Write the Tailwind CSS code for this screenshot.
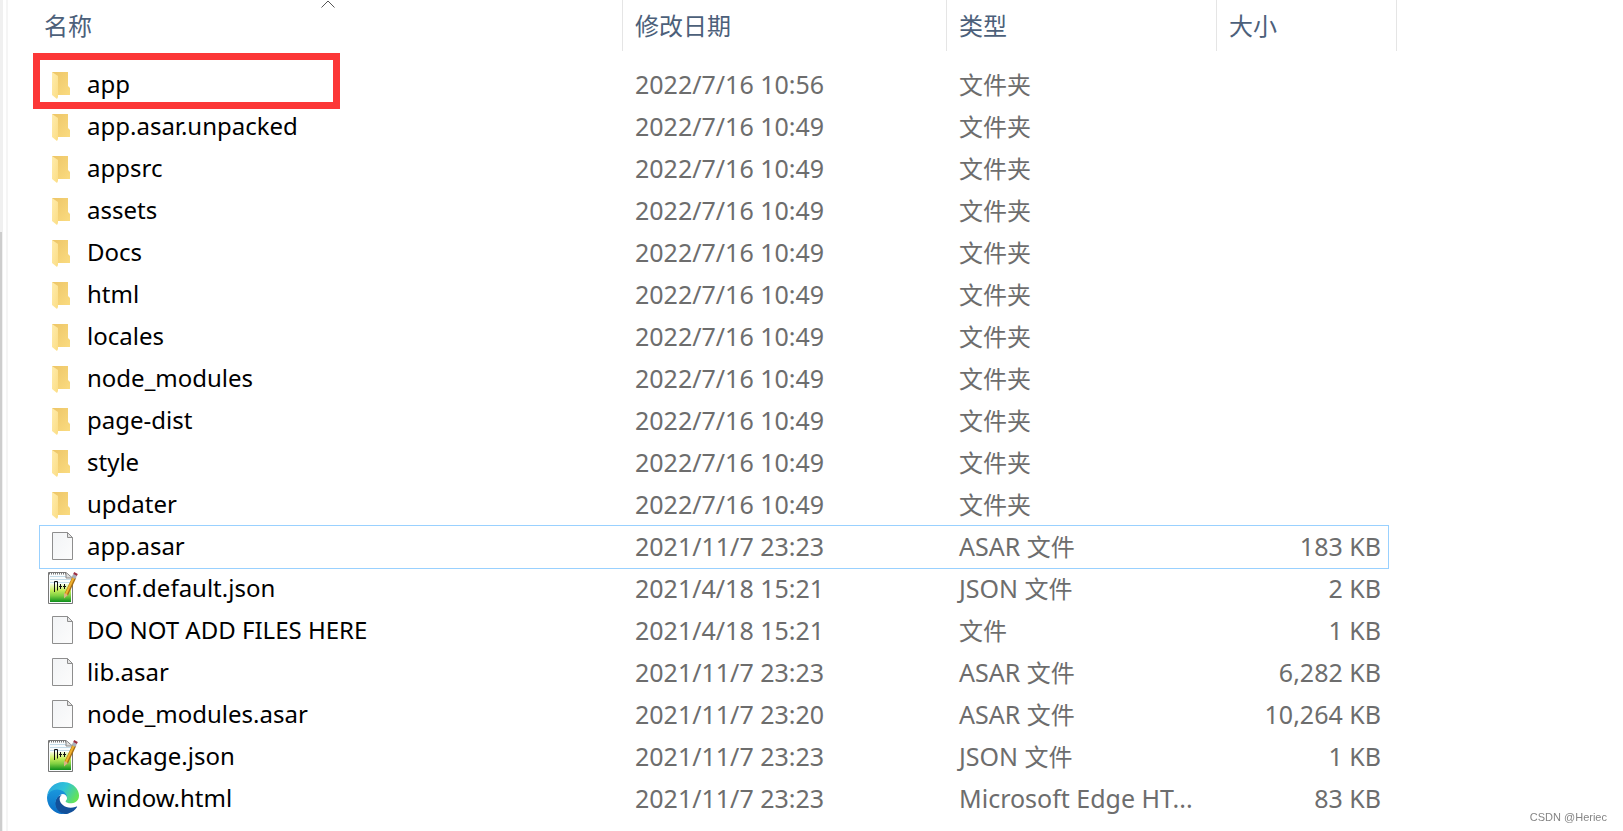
<!DOCTYPE html>
<html lang="zh-CN">
<head>
    <meta charset="UTF-8">
    <meta name="viewport" content="width=device-width, initial-scale=1.0">
    <title>resources</title>
    <script src="https://cdn.jsdelivr.net/npm/@tailwindcss/browser@4"></script>
</head>
<body class="bg-white font-['Noto_Sans','Noto_Sans_CJK_SC',sans-serif] text-[25px] text-[#6d6d6d]">
    <!-- icons -->
    <svg class="absolute size-0">
        <defs>
            <linearGradient id="gFront" x1="0" y1="0" x2="1" y2="1">
                <stop offset="0" stop-color="#ffecac"/><stop offset="1" stop-color="#fbdd85"/>
            </linearGradient>
            <linearGradient id="gBack" x1="0" y1="0" x2="1" y2="1">
                <stop offset="0" stop-color="#edc567"/><stop offset="1" stop-color="#fadb80"/>
            </linearGradient>
            <linearGradient id="gPage" x1="0" y1="0" x2="1" y2="1">
                <stop offset="0" stop-color="#f2f4f6"/><stop offset="1" stop-color="#fcfcfc"/>
            </linearGradient>
            <linearGradient id="gGreen" x1="0" y1="0" x2="0" y2="1">
                <stop offset="0" stop-color="#f4fbe0"/><stop offset=".35" stop-color="#c6ee5c"/><stop offset=".65" stop-color="#7fd042"/><stop offset="1" stop-color="#0c8f1b"/>
            </linearGradient>
            <linearGradient id="gEdgeTop" x1="0" y1=".2" x2="1" y2=".6">
                <stop offset="0" stop-color="#2aa5e0"/><stop offset=".5" stop-color="#2fc3d8"/><stop offset="1" stop-color="#66e455"/>
            </linearGradient>
            <linearGradient id="gEdgeLeft" x1="0" y1="0" x2="0" y2="1">
                <stop offset="0" stop-color="#1b9ade"/><stop offset="1" stop-color="#0a6cc4"/>
            </linearGradient>
        </defs>
        <symbol id="folder" viewBox="0 0 32 32">
            <path d="M5 4H21V18L23 20V27H9Z" fill="url(#gBack)"/>
            <path d="M5 4L11 8V29L10 31L5 27Z" fill="url(#gFront)"/>
        </symbol>
        <symbol id="file" viewBox="0 0 32 32">
            <path d="M5.500 2.500H20.500L25.500 7.500V29.500H5.500Z" fill="url(#gPage)" stroke="#8e8e8e"/>
            <path d="M20.500 2.500V7.500H25.500Z" fill="#e4e4e4" stroke="#8e8e8e"/>
        </symbol>
        <symbol id="npp" viewBox="0 0 32 32">
            <path d="M1.500 .5H19L25.500 6V31.500H1.500Z" fill="#fafcfd" stroke="#777"/>
            <path d="M2 1.500H19" stroke="#777" stroke-width="2" stroke-dasharray="1 1"/>
            <path d="M3 4.500H19M3 7.500H24M3 10.500H24" stroke="#c3dbe8"/>
            <path d="M3 12H24V30H3Z" fill="url(#gGreen)"/>
            <path d="M19 1V6H25" fill="#ddd" stroke="#888"/>
            <path d="M7.500 20V9.500H10.500V18.500M12 14.500H15M13.500 12V17M16 14.500H19M17.500 12V17" fill="none" stroke="#111"/>
            <path d="M27.500 5L19 23" stroke="#a86e13" stroke-width="4"/>
            <path d="M27 5L18.500 23" stroke="#f0b12e" stroke-width="2"/>
            <path d="M17 21L21 23L17 26.500Z" fill="#d9b483"/>
            <path d="M26.500 6L28 3" stroke="#a9b0bb" stroke-width="4"/>
            <path d="M28 3L29 1" stroke="#9c2f43" stroke-width="4"/>
        </symbol>
        <symbol id="edge" viewBox="0 0 256 256">
            <path fill="#12509a" d="M235.700 195.500a94 94 0 0 1-10.500 4.700 102 102 0 0 1-36 6.400c-47.300 0-88.500-32.500-88.500-74.300a31.500 31.500 0 0 1 16.400-27.300c-42.800 1.800-53.800 46.400-53.800 72.500 0 73.900 68 78.400 82.800 78.400 7.900 0 19.800-2.300 27-4.600l1.300-.4a128 128 0 0 0 66.600-50.800 4 4 0 0 0-5.300-4.600z"/>
            <path fill="url(#gEdgeLeft)" d="M105.700 241.400A79 79 0 0 1 83 220a81 81 0 0 1 29.500-120c3.100-1.500 8.500-4.100 15.500-4a32 32 0 0 1 25.700 13 32 32 0 0 1 6.400 18.700c0-.2 24.400-79.600-80-79.600-43.900 0-80 41.700-80 78.200a130 130 0 0 0 12 56 128 128 0 0 0 156.400 67.100 75.500 75.500 0 0 1-62.800-8z"/>
            <path fill="url(#gEdgeTop)" d="M152.300 148.900c-.8 1-3.300 2.500-3.300 5.600 0 2.600 1.700 5.100 4.700 7.200 14.400 10 41.500 8.700 41.600 8.700a59.600 59.600 0 0 0 30.300-8.300A61.400 61.400 0 0 0 256 109.300c.3-22.400-8-37.300-11.300-43.900C223.500 23.900 177.700 0 128 0A128 128 0 0 0 0 126.200c.5-36.500 36.800-66 80-66 3.500 0 23.500.3 42 10 16.300 8.600 24.900 19 30.900 29.200 6.200 10.700 7.200 24.200 7.200 29.600s-2.700 13.300-7.800 19.900z"/>
        </symbol>
    </svg>

    <!-- pane splitter with the scroll bar on the left -->
    <div class="flex min-h-screen">
        <div class="w-[3px] bg-[#f0f0f0] pt-[232px] flex">
            <div class="w-[2px] bg-[#cdcdcd]"></div>
        </div>
        <div class="w-[5px] border-r-2 border-[#f5f5f5]"></div>

        <main class="flex-1 pl-[31px] pr-[226px]">
            <table class="w-full table-fixed border-separate border-spacing-0 whitespace-nowrap">
                <thead class="text-2xl text-[#4c607a] text-left">
                    <tr class="h-[51px]">
                        <th class="relative border-r border-[#e5e5e5] pt-px pl-[5px] font-normal">名称
                            <svg class="absolute left-[282px] top-0 w-[14px] h-[8px]" viewBox="0 0 14 8" fill="none" stroke="#555"><path d="M.5 7.500L7 1L13.500 7.500"/></svg>
                        </th>
                        <th class="w-[324px] border-r border-[#e5e5e5] pt-px pl-3 font-normal">修改日期</th>
                        <th class="w-[270px] border-r border-[#e5e5e5] pt-px pl-3 font-normal">类型</th>
                        <th class="w-[180px] border-r border-[#e5e5e5] pt-px pl-3 font-normal">大小</th>
                    </tr>
                    <tr class="h-[13px]"></tr>
                </thead>
                <tbody id="files"></tbody>
            </table>
        </main>
    </div>
    <p class="fixed right-4 bottom-1 font-['Liberation_Sans',sans-serif] text-[11px] leading-5 text-[#858585]">CSDN @Heriec</p>

    <script>
        const files = [
            ['folder', 'app', '2022/7/16 10:56', '', '文件夹', ''],
            ['folder', 'app.asar.unpacked', '2022/7/16 10:49', '', '文件夹', ''],
            ['folder', 'appsrc', '2022/7/16 10:49', '', '文件夹', ''],
            ['folder', 'assets', '2022/7/16 10:49', '', '文件夹', ''],
            ['folder', 'Docs', '2022/7/16 10:49', '', '文件夹', ''],
            ['folder', 'html', '2022/7/16 10:49', '', '文件夹', ''],
            ['folder', 'locales', '2022/7/16 10:49', '', '文件夹', ''],
            ['folder', 'node_modules', '2022/7/16 10:49', '', '文件夹', ''],
            ['folder', 'page-dist', '2022/7/16 10:49', '', '文件夹', ''],
            ['folder', 'style', '2022/7/16 10:49', '', '文件夹', ''],
            ['folder', 'updater', '2022/7/16 10:49', '', '文件夹', ''],
            ['file', 'app.asar', '2021/11/7 23:23', 'ASAR ', '文件', '183 KB'],
            ['npp', 'conf.default.json', '2021/4/18 15:21', 'JSON ', '文件', '2 KB'],
            ['file', 'DO NOT ADD FILES HERE', '2021/4/18 15:21', '', '文件', '1 KB'],
            ['file', 'lib.asar', '2021/11/7 23:23', 'ASAR ', '文件', '6,282 KB'],
            ['file', 'node_modules.asar', '2021/11/7 23:20', 'ASAR ', '文件', '10,264 KB'],
            ['npp', 'package.json', '2021/11/7 23:23', 'JSON ', '文件', '1 KB'],
            ['edge', 'window.html', '2021/11/7 23:23', 'Microsoft Edge HT...', '', '83 KB'],
        ];

        // focused row gets the blue frame, the first one the red marker
        const focusFrame = '<div class="absolute -top-px -bottom-px left-0 right-2 border border-[#99d1ff] pointer-events-none"></div>';
        const redMarker = '<div class="absolute top-[-11px] left-[-6px] w-[307px] h-[56px] border-[7px] border-[#fc3737]"></div>';

        document.getElementById('files').innerHTML = files.map(([icon, name, date, kind, kindCn, size]) => `
            <tr class="relative h-[42px] leading-9">
                <td class="pb-0.5 text-2xl leading-9 text-black">
                    ${name === 'app' ? redMarker : ''}${name === 'app.asar' ? focusFrame : ''}
                    <div class="flex items-center gap-2 pl-2">
                        <svg class="size-8"><use href="#${icon}"/></svg>${name}
                    </div>
                </td>
                <td class="pb-0.5 pl-3">${date}</td>
                <td class="pb-0.5 pl-3">${kind}<span class="text-2xl leading-9">${kindCn}</span></td>
                <td class="pb-0.5 pr-4 text-right">${size}</td>
            </tr>`).join('');
    </script>
</body>
</html>
